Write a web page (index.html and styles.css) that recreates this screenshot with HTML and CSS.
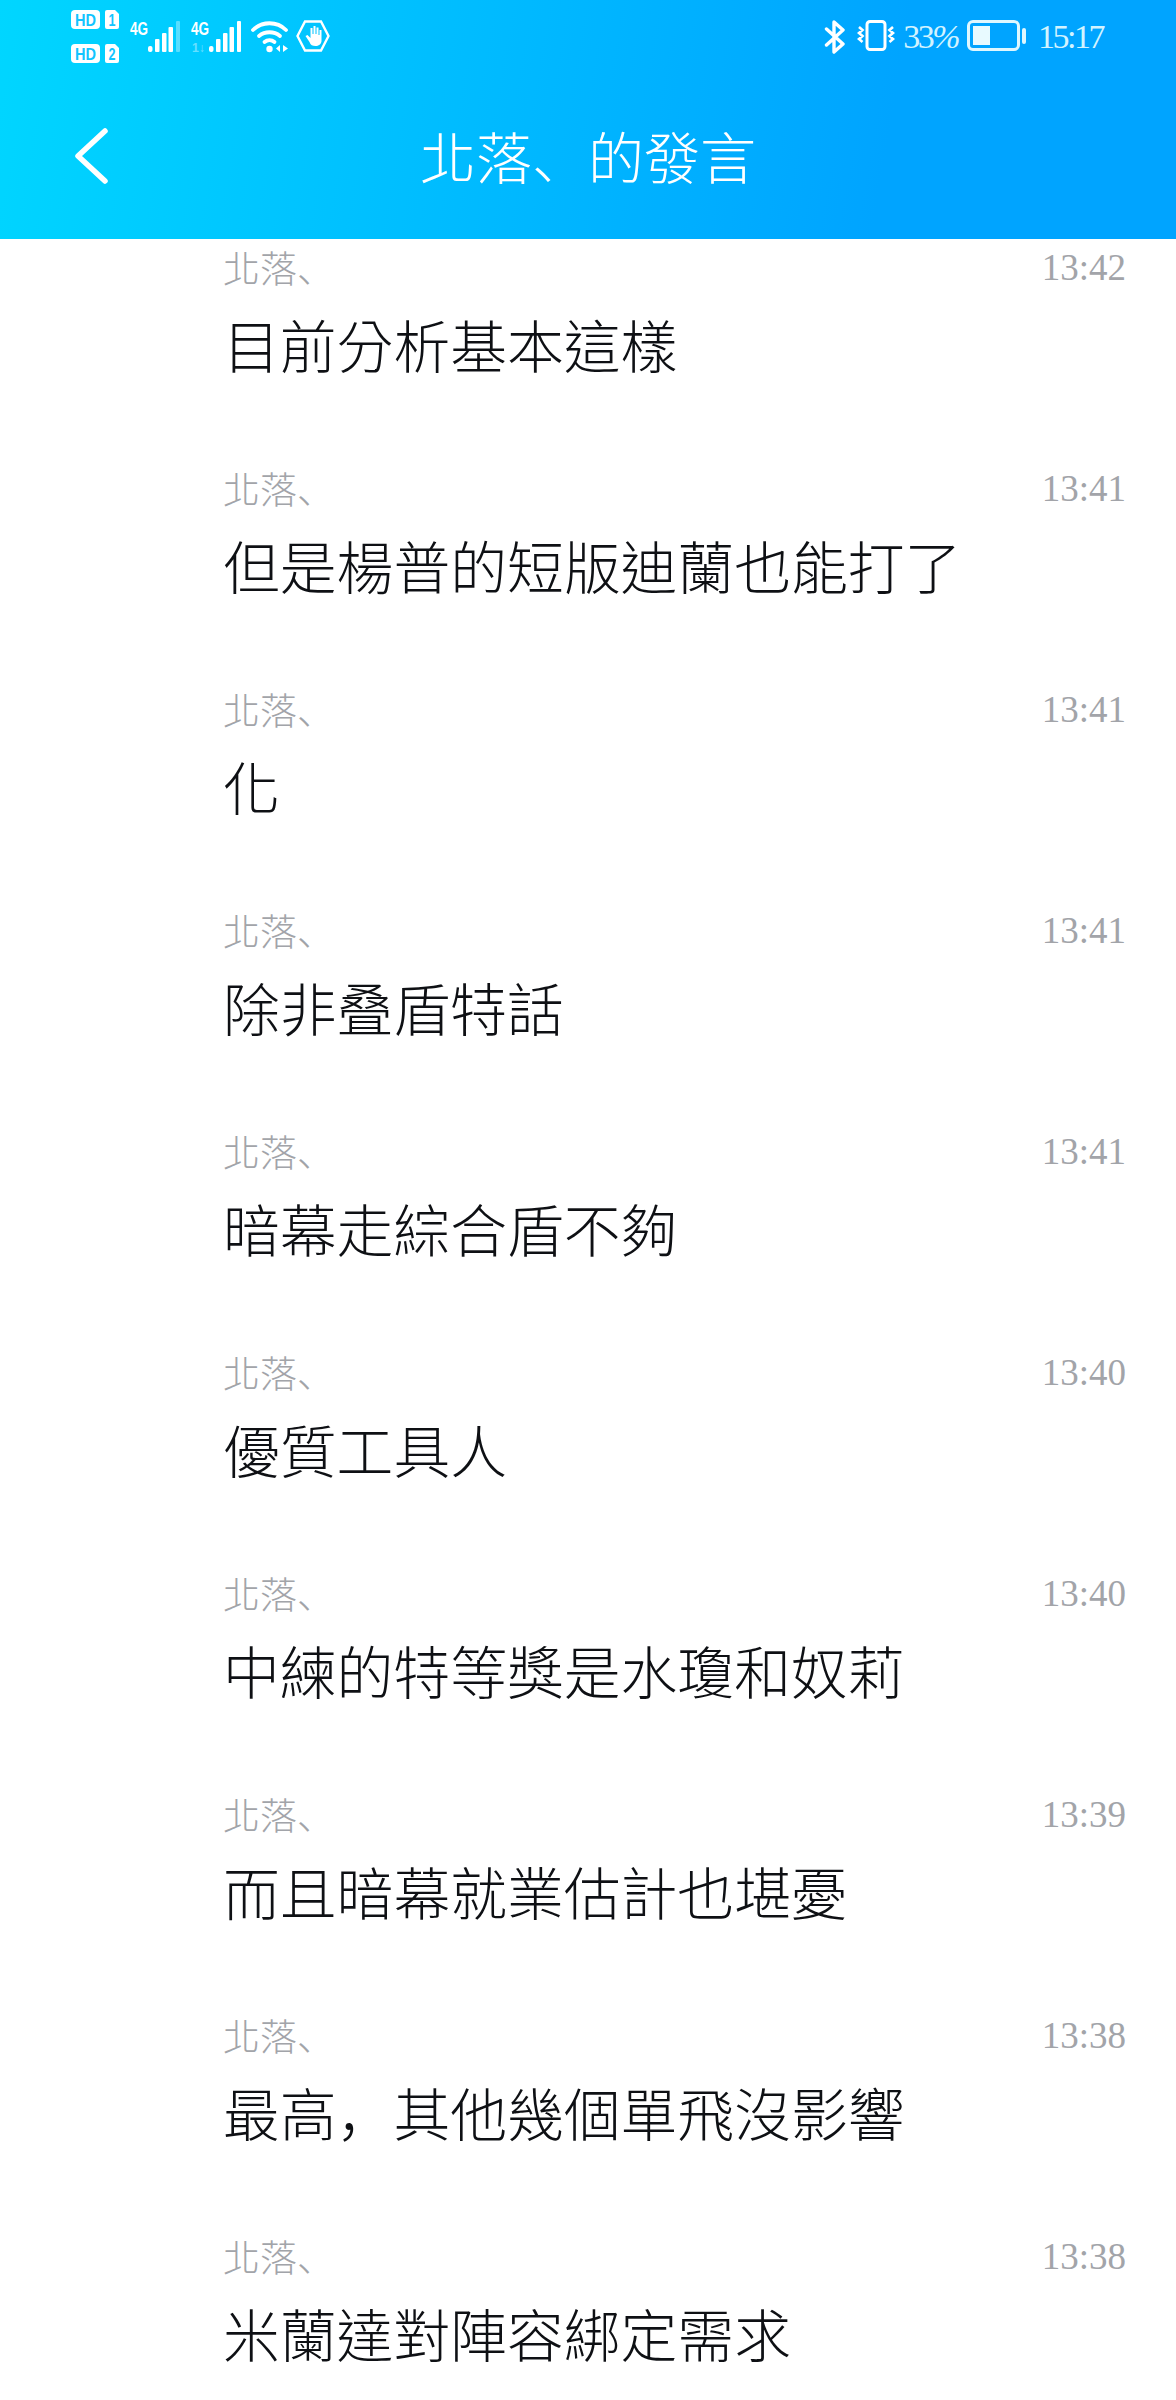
FILE: index.html
```html
<!DOCTYPE html>
<html lang="zh-Hant">
<head>
    <meta charset="UTF-8">
    <meta name="viewport" content="width=device-width, initial-scale=1.0">
    <title>北落、的發言</title>
    <link rel="stylesheet" href="styles.css">
</head>
<body>

    <header class="top">
        <div class="status">
            <div class="status-group">
                <svg class="ico-sims" width="50" height="54" viewBox="0 0 50 54">
                    <rect x="0" y="0" width="29" height="19" rx="4" fill="#fff"/>
                    <text x="4" y="15.500" class="ico-cut" fill="#12c4ff" textLength="21" lengthAdjust="spacingAndGlyphs">HD</text>
                    <path d="M34 2a2 2 0 0 1 2-2h8l4 4v13a2 2 0 0 1-2 2H36a2 2 0 0 1-2-2z" fill="#fff"/>
                    <text x="37.500" y="15.500" class="ico-cut" fill="#12c4ff" textLength="7" lengthAdjust="spacingAndGlyphs">1</text>
                    <rect x="0" y="34" width="29" height="19" rx="4" fill="#fff"/>
                    <text x="4" y="49.500" class="ico-cut" fill="#12c4ff" textLength="21" lengthAdjust="spacingAndGlyphs">HD</text>
                    <path d="M34 36a2 2 0 0 1 2-2h8l4 4v13a2 2 0 0 1-2 2H36a2 2 0 0 1-2-2z" fill="#fff"/>
                    <text x="37.500" y="49.500" class="ico-cut" fill="#12c4ff" textLength="7" lengthAdjust="spacingAndGlyphs">2</text>
                </svg>
                <svg class="ico-signal" width="50" height="42" viewBox="0 -6 50 42">
                    <text x="0" y="14" class="ico-net" textLength="18" lengthAdjust="spacingAndGlyphs">4G</text>
                    <rect x="18" y="25" width="4.500" height="6" rx="2" fill="#fff"/>
                    <rect x="25" y="18" width="4.500" height="13" rx="1" fill="#fff"/>
                    <rect x="32" y="12" width="4.500" height="19" rx="1" fill="#fff"/>
                    <rect x="38.500" y="6" width="4.500" height="25" rx="1" fill="#fff"/>
                    <rect x="46" y="0" width="4" height="31" rx="1" fill="#fff" opacity=".35"/>
                </svg>
                <svg class="ico-signal" width="50" height="42" viewBox="0 -6 50 42">
                    <text x="0" y="14" class="ico-net" textLength="18" lengthAdjust="spacingAndGlyphs">4G</text>
                    <text x="1" y="31" class="ico-net ico-faint" textLength="13" lengthAdjust="spacingAndGlyphs">1↓</text>
                    <rect x="18" y="25" width="4.500" height="6" rx="2" fill="#fff"/>
                    <rect x="25" y="18" width="4.500" height="13" rx="1" fill="#fff"/>
                    <rect x="32" y="12" width="4.500" height="19" rx="1" fill="#fff"/>
                    <rect x="38.500" y="6" width="4.500" height="25" rx="1" fill="#fff"/>
                    <rect x="46" y="0" width="4" height="31" rx="1" fill="#fff"/>
                </svg>
                <svg class="ico-wifi" width="38" height="32" viewBox="0 0 38 32">
                    <g fill="none" stroke="#fff" stroke-width="3.800" stroke-linecap="round">
                        <path d="M2 9C11 0 26 0 35 9"/>
                        <path d="M8 15c6-5 15-5 21 0"/>
                        <path d="M13.500 21c3-2.500 7-2.500 10 0"/>
                    </g>
                    <circle cx="18.500" cy="28" r="3.200" fill="#fff"/>
                    <path d="M29 24v7l-4-3.500zM32 24v7l5-3.500z" fill="#fff"/>
                </svg>
                <svg class="ico-hand" width="34" height="32" viewBox="0 0 34 32">
                    <path d="M9 1.500h16L32.500 16 25 30.500H9L1.500 16z" fill="none" stroke="#fff" stroke-width="2.400"/>
                    <path d="M9.500 16l2-1 3 3V8h2v6h1V6h2v8h1V7.500h2V15h1V10h2v11c0 3-3 5-6 5-3 0-5-1-6-4z" fill="#fff"/>
                </svg>
            </div>
            <div class="status-group status-right">
                <svg class="ico-bt" width="22" height="34" viewBox="0 0 22 34">
                    <path d="M2.500 9L19 24l-9 8V2l9 8L2.500 25" fill="none" stroke="#fff" stroke-width="3.400" stroke-linejoin="round" stroke-linecap="round"/>
                </svg>
                <svg class="ico-vib" width="38" height="31" viewBox="0 0 38 31">
                    <rect x="10" y="1.500" width="18" height="28" rx="3" fill="none" stroke="#fff" stroke-width="3"/>
                    <path d="M2 7l3.500 3L2 13l3.500 3L2 19l3.500 3M36 7l-3.500 3 3.500 3-3.500 3 3.500 3-3.500 3" fill="none" stroke="#fff" stroke-width="2.600"/>
                </svg>
                <span class="status-text status-pct">33<em>%</em></span>
                <div class="battery">
                    <div class="battery-body"><div class="battery-fill"></div></div>
                    <div class="battery-nub"></div>
                </div>
                <span class="status-text status-time">15:17</span>
            </div>
        </div>
        <div class="titlebar">
            <svg class="back" width="36" height="60" viewBox="0 0 36 60">
                <path d="M32 5L5 30l27 25" fill="none" stroke="#fff" stroke-width="5.500" stroke-linecap="round" stroke-linejoin="round"/>
            </svg>
            <h1>北落<span class="punct" lang="zh-Hans">、</span>的發言</h1>
        </div>
    </header>

    <ul class="list">
        <li class="row">
            <div class="row-head"><span class="name">北落<span class="punct" lang="zh-Hans">、</span></span><span class="time">13:42</span></div>
            <p class="msg">目前分析基本這樣</p>
        </li>
        <li class="row">
            <div class="row-head"><span class="name">北落<span class="punct" lang="zh-Hans">、</span></span><span class="time">13:41</span></div>
            <p class="msg">但是楊普的短版迪蘭也能打了</p>
        </li>
        <li class="row">
            <div class="row-head"><span class="name">北落<span class="punct" lang="zh-Hans">、</span></span><span class="time">13:41</span></div>
            <p class="msg">化</p>
        </li>
        <li class="row">
            <div class="row-head"><span class="name">北落<span class="punct" lang="zh-Hans">、</span></span><span class="time">13:41</span></div>
            <p class="msg">除非叠盾特話</p>
        </li>
        <li class="row">
            <div class="row-head"><span class="name">北落<span class="punct" lang="zh-Hans">、</span></span><span class="time">13:41</span></div>
            <p class="msg">暗幕走綜合盾不夠</p>
        </li>
        <li class="row">
            <div class="row-head"><span class="name">北落<span class="punct" lang="zh-Hans">、</span></span><span class="time">13:40</span></div>
            <p class="msg">優質工具人</p>
        </li>
        <li class="row">
            <div class="row-head"><span class="name">北落<span class="punct" lang="zh-Hans">、</span></span><span class="time">13:40</span></div>
            <p class="msg">中練的特等獎是水瓊和奴莉</p>
        </li>
        <li class="row">
            <div class="row-head"><span class="name">北落<span class="punct" lang="zh-Hans">、</span></span><span class="time">13:39</span></div>
            <p class="msg">而且暗幕就業估計也堪憂</p>
        </li>
        <li class="row">
            <div class="row-head"><span class="name">北落<span class="punct" lang="zh-Hans">、</span></span><span class="time">13:38</span></div>
            <p class="msg">最高<span class="punct" lang="zh-Hans">&#xFF0C;</span>其他幾個單飛沒影響</p>
        </li>
        <li class="row">
            <div class="row-head"><span class="name">北落<span class="punct" lang="zh-Hans">、</span></span><span class="time">13:38</span></div>
            <p class="msg">米蘭達對陣容綁定需求</p>
        </li>
    </ul>

</body>
</html>
```

FILE: styles.css
```css
html, body {
    margin: 0;
    padding: 0;
    height: 2400px;
    overflow: hidden;
    background-color: #fff;
}
body {
    font-family: "Liberation Serif", "Noto Sans CJK TC", serif;
}
/* punctuation sits low and left in the cell, the TC font centres it */
.punct {
    font-family: "Noto Sans CJK SC", sans-serif;
    line-height: 0;
}
.top {
    height: 239px;
    background-image: linear-gradient(100deg, #00d6ff 0%, #00a4ff 75%);
    color: #fff;
}
.status {
    height: 72px;
    padding: 10px 73px 0 71px;
    box-sizing: border-box;
    display: flex;
    justify-content: space-between;
    align-items: flex-start;
}
.status-group {
    display: flex;
    align-items: flex-start;
}
.ico-signal {
    margin: 5px 0 0 9px;
}
.ico-signal + .ico-signal {
    margin-left: 11px;
}
.ico-wifi {
    margin: 11px 0 0 10px;
}
.ico-hand {
    margin: 10px 0 0 7px;
}
.ico-cut {
    font-family: "Liberation Sans", sans-serif;
    font-size: 17px;
    font-weight: bold;
}
.ico-net {
    font-family: "Liberation Sans", sans-serif;
    font-size: 18px;
    font-weight: bold;
    fill: #fff;
}
.ico-faint {
    opacity: .4;
    font-size: 12px;
}
.status-right {
    padding-top: 10px;
}
.ico-vib {
    margin-left: 11px;
}
.status-text {
    font-size: 34px;
    line-height: 33px;
    color: #d2f3ff;
    letter-spacing: -2.500px;
}
.status-pct {
    margin-left: 8px;
}
.status-pct em {
    font-style: italic;
}
.battery {
    display: flex;
    align-items: center;
    margin-left: 9px;
    height: 31px;
}
.battery-body {
    width: 53px;
    height: 31px;
    box-sizing: border-box;
    border: 3px solid #dff7ff;
    border-radius: 6px;
    padding: 3px;
}
.battery-fill {
    width: 17px;
    height: 100%;
    background-color: #e8faff;
}
.battery-nub {
    width: 4px;
    height: 16px;
    margin-left: 2px;
    border-radius: 2px;
    background-color: #dff7ff;
}
.status-time {
    margin-left: 12px;
}
.titlebar {
    height: 167px;
    display: grid;
    grid-template-columns: 1fr auto 1fr;
    align-items: center;
    padding: 0 0 0 73px;
}
.titlebar h1 {
    grid-column: 2;
    grid-row: 1;
    margin: -2px 0 0 -73px;
    font-size: 56px;
    font-weight: 300;
    color: #fff;
}
.back {
    grid-column: 1;
    grid-row: 1;
}
.list {
    list-style: none;
    margin: 0;
    padding: 0;
}
.row {
    height: 221px;
    box-sizing: border-box;
    padding: 7px 50px 0 223px;
}
.row-head {
    display: flex;
    justify-content: space-between;
    align-items: center;
    height: 42px;
}
.name {
    font-size: 37px;
    font-weight: 300;
    color: #a2a4a9;
}
.time {
    font-size: 37px;
    color: #a2a4a9;
}
.msg {
    margin: 21px 0 0;
    font-size: 56.800px;
    font-weight: 300;
    line-height: 80px;
    color: #0e1014;
}
```
